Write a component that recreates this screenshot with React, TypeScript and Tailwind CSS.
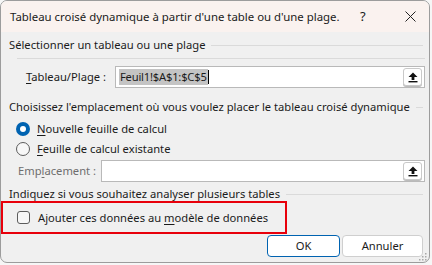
import React from "react";

const font = { fontFamily: '"Segoe UI", "Noto Sans", sans-serif' };

const UploadIcon = () => (
  <svg width="12" height="12" viewBox="0 0 12 12">
    <path d="M6 1.5 L10.5 6 L7.4 6 L7.4 9 L4.6 9 L4.6 6 L1.5 6 Z" fill="#111" />
    <rect x="1.5" y="10" width="9" height="1.4" fill="#111" />
  </svg>
);

const RefButton = () => (
  <div className="flex items-center justify-center w-[19px] h-[18px] rounded-[3px] border border-[#c9c9c9] bg-white shadow-[0_1px_0_#bcbcbc]">
    <UploadIcon />
  </div>
);

const GroupHeader = ({ text }: { text: string }) => (
  <div className="flex items-center h-[16px] pl-[8px] pr-[6px]">
    <span className="whitespace-nowrap">{text}</span>
    <div className="flex-1 h-px bg-[#dadada] ml-[6px]"></div>
  </div>
);

const U = ({ children }: { children: React.ReactNode }) => (
  <span className="underline underline-offset-2 decoration-1">{children}</span>
);

const App = () => {
  return (
    <div
      className="w-[432px] h-[265px] bg-[#f6f6f6] text-[11.2px] text-[#1b1b1b] leading-none"
      style={font}
    >
      <div className="relative w-[430px] h-[263px] rounded-[7px] border border-[#9c9c9c] bg-[#f0f0f0] overflow-hidden flex flex-col">
        {/* title bar */}
        <div className="flex items-center h-[31px] shrink-0 bg-[#faf2ef] pl-[9px]">
          <span className="flex-1 whitespace-nowrap text-[11.4px]">
            Tableau croisé dynamique à partir d'une table ou d'une plage.
          </span>
          <span className="w-[45px] text-[13px]">?</span>
          <svg width="11" height="11" viewBox="0 0 11 11" className="mr-[13px]">
            <path d="M0.5 0.5 L10.5 10.5 M10.5 0.5 L0.5 10.5" stroke="#222" strokeWidth="1" />
          </svg>
        </div>

        {/* section 1 */}
        <div className="mt-[5px] shrink-0">
          <GroupHeader text="Sélectionner un tableau ou une plage" />
        </div>
        <div className="mt-[5px] ml-[16px] mr-[4px] h-px shrink-0 bg-[#dadada]"></div>
        <div className="mt-[7px] flex items-center h-[22px] shrink-0 pl-[25px] pr-[4px]">
          <span className="w-[89px] whitespace-nowrap">
            <U>T</U>ableau/Plage :
          </span>
          <div className="flex-1 flex items-center h-full border border-[#b9b9b9] bg-white pl-[3px] pr-[2px]">
            <span className="bg-[#c4c4c4] px-px h-[16px] flex items-center whitespace-nowrap tracking-[-0.2px]">
              Feuil1!$A$1:$C$5
            </span>
            <span className="w-px h-[14px] bg-black"></span>
            <div className="ml-auto">
              <RefButton />
            </div>
          </div>
        </div>

        {/* section 2 */}
        <div className="mt-[11px] shrink-0">
          <GroupHeader text="Choisissez l'emplacement où vous voulez placer le tableau croisé dynamique" />
        </div>
        <div className="mt-[6px] flex items-center h-[16px] shrink-0 pl-[15px]">
          <div className="w-[14px] h-[14px] rounded-full bg-[#0063b1] flex items-center justify-center">
            <div className="w-[6px] h-[6px] rounded-full bg-white"></div>
          </div>
          <span className="ml-[7px]">
            <U>N</U>ouvelle feuille de calcul
          </span>
        </div>
        <div className="mt-[4px] flex items-center h-[16px] shrink-0 pl-[15px]">
          <div className="w-[14px] h-[14px] rounded-full border border-[#5c5c5c] bg-[#f7f7f7]"></div>
          <span className="ml-[7px]">
            <U>F</U>euille de calcul existante
          </span>
        </div>
        <div className="mt-[3px] flex items-center h-[22px] shrink-0 pl-[17px] pr-[4px]">
          <span className="w-[83px] whitespace-nowrap text-[#6e6e6e]">
            Emp<U>l</U>acement :
          </span>
          <div className="flex-1 flex items-center h-full border border-[#b9b9b9] bg-white pr-[2px]">
            <div className="ml-auto">
              <RefButton />
            </div>
          </div>
        </div>

        {/* section 3 */}
        <div className="mt-[5px] h-[14px] shrink-0 flex items-center">
          <div className="w-full">
            <GroupHeader text="Indiquez si vous souhaitez analyser plusieurs tables" />
          </div>
        </div>
        <div className="w-[286px] h-[33px] shrink-0 border-2 border-[#e8000b] flex items-center pl-[14px]">
          <div className="w-[13px] h-[13px] rounded-[3px] border border-[#5c5c5c] bg-[#f7f7f7]"></div>
          <span className="ml-[8px] whitespace-nowrap">
            Ajouter ces données au <U>m</U>odèle de données
          </span>
        </div>

        {/* buttons */}
        <div className="mt-px flex items-center shrink-0 pr-[6px]">
          <div className="ml-auto flex gap-[2px]">
            <button className="w-[73px] h-[22px] rounded-[4px] border border-[#0063b1] bg-white">
              OK
            </button>
            <button className="w-[81px] h-[22px] rounded-[4px] border border-[#cfcfcf] bg-white">
              Annuler
            </button>
          </div>
        </div>

        {/* resize grip */}
        <svg width="8" height="8" viewBox="0 0 8 8" className="absolute right-[2px] bottom-[1px]">
          <rect x="6" y="0" width="1.5" height="1.5" fill="#a8a8a8" />
          <rect x="3" y="3" width="1.5" height="1.5" fill="#a8a8a8" />
          <rect x="6" y="3" width="1.5" height="1.5" fill="#a8a8a8" />
          <rect x="0" y="6" width="1.5" height="1.5" fill="#a8a8a8" />
          <rect x="3" y="6" width="1.5" height="1.5" fill="#a8a8a8" />
          <rect x="6" y="6" width="1.5" height="1.5" fill="#a8a8a8" />
        </svg>
      </div>
    </div>
  );
};

export default App;
